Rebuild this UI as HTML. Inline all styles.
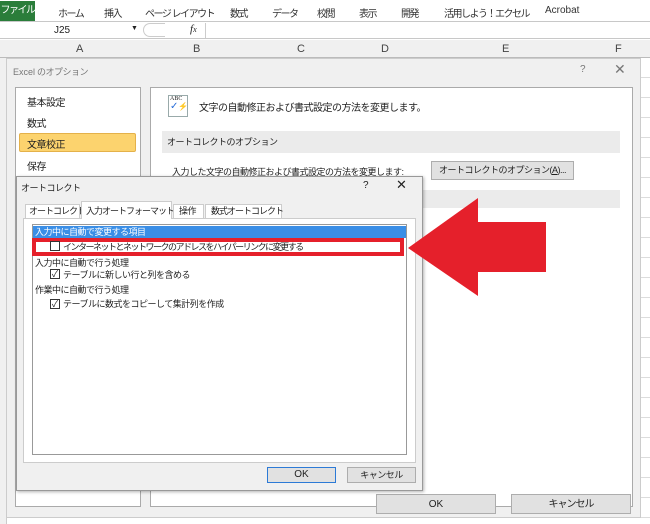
<!DOCTYPE html>
<html><head><meta charset="utf-8"><style>
*{box-sizing:border-box;margin:0;padding:0}
body{width:650px;height:524px;overflow:hidden;background:#fff;font-family:"Liberation Sans","Noto Sans CJK JP",sans-serif;font-size:10px;letter-spacing:-0.5px;color:#222;position:relative}
.a{position:absolute;white-space:nowrap}
.btn{position:absolute;white-space:nowrap;background:#e1e1e1;border:1px solid #adadad;text-align:center;font-size:10px;line-height:17px}
.l{letter-spacing:0}
.d{font-size:9px;letter-spacing:-0.5px}
</style></head><body>
<!-- ribbon -->
<div class="a" style="left:0;top:0;width:650px;height:22px;background:#fff;border-bottom:1px solid #c8c8c8"></div>
<div class="a" style="left:0;top:1px;width:35px;height:20px;background:#2a7d3a;color:#fff;line-height:20px;text-align:center;letter-spacing:-1.5px">ファイル</div>
<div class="a" style="top:5px;left:0;color:#333;letter-spacing:-1.5px">
<span class="a" style="left:58px">ホーム</span><span class="a" style="left:104px">挿入</span><span class="a" style="left:145px">ページ レイアウト</span><span class="a" style="left:230px">数式</span><span class="a" style="left:272px">データ</span><span class="a" style="left:317px">校閲</span><span class="a" style="left:359px">表示</span><span class="a" style="left:401px">開発</span><span class="a" style="left:444px">活用しよう！エクセル</span><span class="a l" style="left:545px">Acrobat</span></div>
<!-- formula bar -->
<div class="a" style="left:0;top:22px;width:650px;height:17px;border-bottom:1px solid #c8c8c8"></div>
<div class="a l" style="left:54px;top:25px">J25</div>
<div class="a" style="left:131px;top:25px;font-size:7px">▼</div>
<div class="a" style="left:143px;top:23px;width:22px;height:14px;border:1px solid #ccc;border-radius:7px 0 0 7px;border-right:none"></div>
<div class="a l" style="left:190px;top:23px;font-style:italic;font-family:'Liberation Serif',serif;font-size:11px">f<span style="font-size:8px">x</span></div>
<div class="a" style="left:205px;top:23px;width:1px;height:15px;background:#ccc"></div>
<!-- column headers -->
<div class="a l" style="left:0;top:40px;width:650px;height:18px;background:#f0f0f0;border-bottom:1px solid #bbb;color:#444;font-size:11px;line-height:18px">
<span class="a" style="left:76px">A</span><span class="a" style="left:193px">B</span><span class="a" style="left:297px">C</span><span class="a" style="left:381px">D</span><span class="a" style="left:502px">E</span><span class="a" style="left:615px">F</span></div>
<div class="a" style="left:0;top:58px;width:650px;height:466px;background:repeating-linear-gradient(#fff 0 19px,#dcdcdc 19px 20px)"></div>
<div class="a" style="left:0;top:58px;width:7px;height:466px;background:#f0f0f0;border-right:1px solid #ccc"></div>
<!-- options dialog -->
<div class="a" style="left:6px;top:58px;width:635px;height:460px;background:#f0f0f0;border:1px solid #ccc"></div>
<div class="a" style="left:13px;top:65px;color:#777;font-size:9px"><span class="l">Excel</span> のオプション</div>
<div class="a" style="left:580px;top:64px;color:#777">?</div>
<div class="a" style="left:614px;top:61px;color:#777;font-size:14px">✕</div>
<div class="a" style="left:15px;top:87px;width:126px;height:420px;background:#fff;border:1px solid #aaa"></div>
<div class="a" style="left:27px;top:94px">基本設定</div>
<div class="a" style="left:27px;top:115px">数式</div>
<div class="a" style="left:19px;top:133px;width:117px;height:19px;background:#fcd36e;border:1px solid #e4b14a;border-radius:2px"></div>
<div class="a" style="left:27px;top:136px">文章校正</div>
<div class="a" style="left:27px;top:158px">保存</div>
<div class="a" style="left:150px;top:87px;width:483px;height:420px;background:#fff;border:1px solid #aaa"></div>
<div class="a l" style="left:168px;top:95px;width:20px;height:22px;border:1px solid #9aa;background:#fff;font-size:6px;font-family:'Liberation Serif',serif;line-height:7px;padding-left:1px">ABC<br><span style="color:#2a6ed8;font-size:10px">✓</span><span style="color:#f0c020;font-size:8px">⚡</span></div>
<div class="a" style="left:199px;top:99px">文字の自動修正および書式設定の方法を変更します。</div>
<div class="a" style="left:162px;top:131px;width:458px;height:22px;background:#ebebeb;line-height:22px;padding-left:5px;font-size:9px">オートコレクトのオプション</div>
<div class="a d" style="left:172px;top:165px">入力した文字の自動修正および書式設定の方法を変更します:</div>
<div class="btn d" style="left:431px;top:161px;width:143px;height:19px">オートコレクトのオプション(<u>A</u>)...</div>
<div class="a" style="left:420px;top:190px;width:200px;height:18px;background:#ebebeb"></div>
<div class="btn" style="left:376px;top:494px;width:120px;height:20px;line-height:19px;letter-spacing:0">OK</div>
<div class="btn" style="left:511px;top:494px;width:120px;height:20px;line-height:19px;letter-spacing:-1px">キャンセル</div>
<!-- autocorrect dialog -->
<div class="a" style="left:16px;top:176px;width:407px;height:315px;background:#f0f0f0;border:1px solid #999;box-shadow:1px 1px 3px rgba(0,0,0,.3)"></div>
<div class="a d" style="left:21px;top:181px">オートコレクト</div>
<div class="a" style="left:363px;top:180px">?</div>
<div class="a" style="left:396px;top:177px;font-size:13px">✕</div>
<div class="a" style="left:23px;top:218px;width:393px;height:245px;background:#fff;border:1px solid #ccc"></div>
<div class="a d" style="left:25px;top:204px;width:55px;height:14px;border:1px solid #ccc;border-bottom:none;padding-left:3px;background:#fff;line-height:13px;letter-spacing:-1px">オートコレクト</div>
<div class="a d" style="left:81px;top:201px;width:91px;height:18px;border:1px solid #ccc;border-bottom:none;background:#fff;padding:2px 0 0 4px;letter-spacing:-1px">入力オートフォーマット</div>
<div class="a d" style="left:173px;top:204px;width:31px;height:14px;border:1px solid #ccc;border-bottom:none;padding-left:5px;background:#fff;line-height:13px">操作</div>
<div class="a d" style="left:205px;top:204px;width:77px;height:14px;border:1px solid #ccc;border-bottom:none;padding-left:5px;background:#fff;line-height:13px;letter-spacing:-1px">数式オートコレクト</div>
<div class="a" style="left:32px;top:224px;width:375px;height:231px;border:1px solid #999;background:#fff"></div>
<div class="a d" style="left:33px;top:226px;width:373px;height:12px;background:#3a8ee6;color:#fff;line-height:12px;padding-left:2px">入力中に自動で変更する項目</div>
<div class="a" style="left:32px;top:238px;width:372px;height:18px;border:4px solid #e5202b;background:#fff"></div>
<div class="a" style="left:50px;top:241px;width:10px;height:10px;border:1px solid #333"></div>
<div class="a" style="left:63px;top:240px;font-size:9px;letter-spacing:-1.5px">インターネットとネットワークのアドレスをハイパーリンクに変更する</div>
<div class="a d" style="left:35px;top:256px">入力中に自動で行う処理</div>
<div class="a l" style="left:50px;top:269px;width:10px;height:10px;border:1px solid #333;font-size:9px;line-height:8px;text-align:center">✓</div>
<div class="a d" style="left:63px;top:268px">テーブルに新しい行と列を含める</div>
<div class="a d" style="left:35px;top:283px">作業中に自動で行う処理</div>
<div class="a l" style="left:50px;top:299px;width:10px;height:10px;border:1px solid #333;font-size:9px;line-height:8px;text-align:center">✓</div>
<div class="a d" style="left:63px;top:297px">テーブルに数式をコピーして集計列を作成</div>
<div class="btn" style="left:267px;top:467px;width:69px;height:16px;line-height:14px;border:1px solid #2c7ad6;letter-spacing:0">OK</div>
<div class="btn d" style="left:347px;top:467px;width:69px;height:16px;line-height:14px">キャンセル</div>
<!-- arrow -->
<svg class="a" style="left:0;top:0" width="650" height="524"><polygon points="408,248 478,198 478,222 546,222 546,272 478,272 478,296" fill="#e5202b"/></svg>
</body></html>
